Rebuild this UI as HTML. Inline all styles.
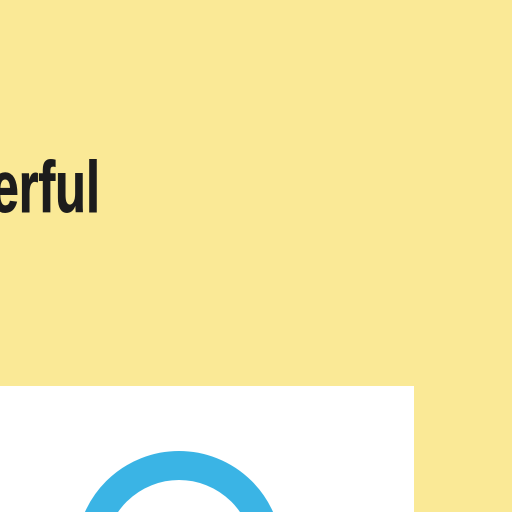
<!DOCTYPE html>
<html><head><style>
html,body{margin:0;padding:0;}
body{width:512px;height:512px;background:#FAE996;position:relative;overflow:hidden;}
.t{position:absolute;right:412px;top:140px;font-family:"Liberation Sans",sans-serif;font-weight:bold;font-size:72px;line-height:96px;color:#1c1c1c;transform:scaleX(0.7);transform-origin:right center;white-space:nowrap;-webkit-text-stroke:1px #1c1c1c;}
.box{position:absolute;left:0;top:386px;width:414px;height:126px;background:#fff;}
svg{position:absolute;left:0;top:0;}
</style></head><body>
<div class="t">wonderful</div>
<div class="box"></div>
<svg width="512" height="512"><circle cx="179" cy="554" r="88.5" fill="none" stroke="#3AB4E5" stroke-width="29"/></svg>
</body></html>
